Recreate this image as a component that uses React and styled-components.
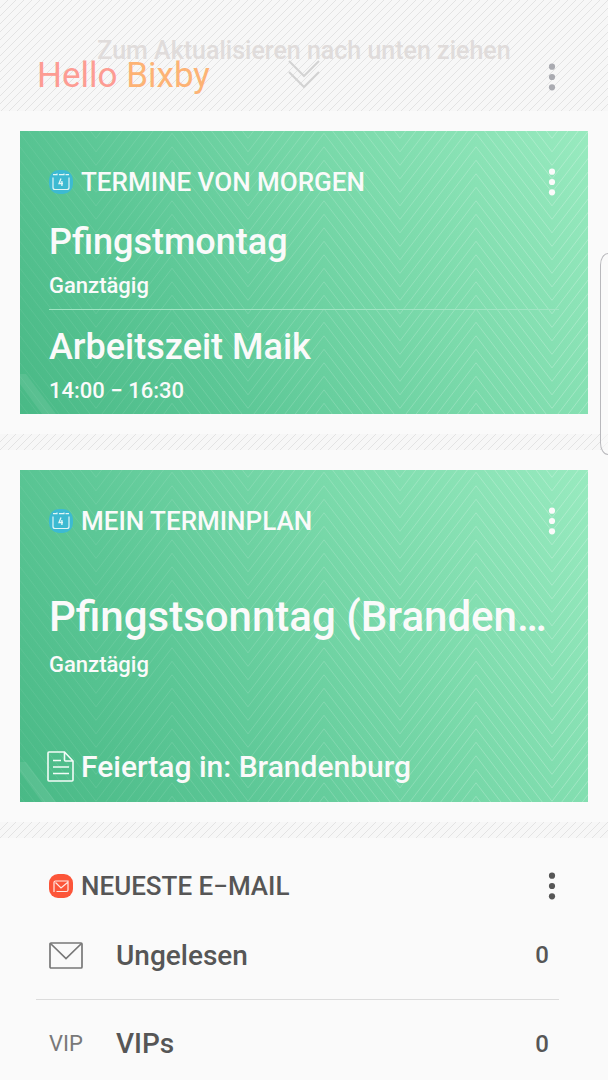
import React from 'react'
import styled, { createGlobalStyle } from 'styled-components'

const appointments = [
  { title: 'Pfingstmontag', time: 'Ganztägig' },
  { title: 'Arbeitszeit Maik', time: '14:00 − 16:30' },
]

function Chevrons() {
  const lines = []
  for (let y = -105.7; y < 420; y += 13.5) {
    const low = y + 99.5
    lines.push(
      <polyline key={y} points={`0,${y} 76,${low} 152,${y} 228,${low} 304,${y} 380,${low} 456,${y} 532,${low} 608,${y}`} />
    )
  }
  return (
    <Backdrop aria-hidden="true">
      <defs>
        <linearGradient id="fade" x1="0" y1="0" x2="1" y2="0">
          <stop offset="0" stopColor="#fff" stopOpacity="0.06" />
          <stop offset="1" stopColor="#fff" stopOpacity="0.26" />
        </linearGradient>
      </defs>
      <g fill="none" stroke="url(#fade)">{lines}</g>
      <svg y="100%" overflow="visible">
        <path d="M0-40H6L36 0H22L0-30Z" fill="#fff" fillOpacity="0.08" />
      </svg>
    </Backdrop>
  )
}

function CalendarIcon() {
  return (
    <svg width="24" height="24" viewBox="0 0 24 24" fill="none" stroke="#e2f6f5" aria-hidden="true">
      <rect width="24" height="24" rx="10" fill="#3dbad2" stroke="none" />
      <path d="M4 7.500V17.500a2 2 0 0 0 2 2H18a2 2 0 0 0 2-2V7.500" strokeWidth="1.2" />
      <path d="M4 4.700h4.500M10 4.700h5M16.500 4.700H20M8 3.500v1.800M15 3.500v1.800" strokeWidth="1.2" />
      <path d="M12 8.500 10 13.500H14M12.900 11v5" strokeWidth="1.3" />
    </svg>
  )
}

function MailBadge() {
  return (
    <svg width="24" height="24" viewBox="0 0 24 24" fill="none" aria-hidden="true">
      <rect width="24" height="24" rx="9" fill="#fc5539" />
      <path
        d="M5 18V8.500A1.500 1.500 0 0 1 6.500 7H19V16A1.500 1.500 0 0 1 17.500 17.500H7.500M6.500 8.500 12 14 18.500 8.500"
        stroke="#ffe9e4"
        strokeWidth="1.2"
      />
    </svg>
  )
}

function NoteIcon() {
  return (
    <svg width="28" height="32" viewBox="0 0 28 32" fill="none" stroke="#f2fcf7" strokeWidth="1.6" aria-hidden="true">
      <path d="M17.500 1H2a1 1 0 0 0-1 1V29a1 1 0 0 0 1 1H25a1 1 0 0 0 1-1V10ZM17.500 1V9a1 1 0 0 0 1 1H26M6 9.500h8M6 16h16M6 22.500h16" />
    </svg>
  )
}

function MailIcon() {
  return (
    <svg width="34" height="27" viewBox="0 0 34 27" fill="none" stroke="#787878" strokeWidth="1.7" aria-hidden="true">
      <rect x="1" y="1" width="32" height="25" rx="1" />
      <path d="M1.500 1.500 17 16.500 32.500 1.500" />
    </svg>
  )
}

function More({ color, label }) {
  return (
    <MoreButton type="button" aria-label={label} $color={color}>
      <svg width="8" height="28" viewBox="0 0 8 28" fill="currentColor" aria-hidden="true">
        <circle cx="4" cy="3.7" r="3.1" />
        <circle cx="4" cy="14" r="3.1" />
        <circle cx="4" cy="24.3" r="3.1" />
      </svg>
    </MoreButton>
  )
}

function App() {
  return (
    <Page>
      <GlobalStyle />
      <Header>
        <PullHint>Zum Aktualisieren nach unten ziehen</PullHint>
        <PullArrow>
          <svg width="32" height="30" viewBox="0 0 32 30" fill="none" stroke="#d3d3d3" strokeWidth="2" aria-hidden="true">
            <path d="M1 1l15 15L31 1M1 12l15 15L31 12" />
          </svg>
        </PullArrow>
        <TitleBar>
          <Logo>Hello <span>Bixby</span></Logo>
          <More color="#aaabb1" label="Menü" />
        </TitleBar>
      </Header>

      <CardSlot>
        <Card>
          <Chevrons />
          <CardHead>
            <CalendarIcon />
            <CardTitle>TERMINE VON MORGEN</CardTitle>
            <More color="#fafafa" label="Termine von morgen: Optionen" />
          </CardHead>
          {appointments.map((x) => (
            <Appointment key={x.title}>
              <AppointmentTitle>{x.title}</AppointmentTitle>
              <Time>{x.time}</Time>
            </Appointment>
          ))}
        </Card>
      </CardSlot>
      <Stripe />

      <CardSlot>
        <Card>
          <Chevrons />
          <CardHead>
            <CalendarIcon />
            <CardTitle>MEIN TERMINPLAN</CardTitle>
            <More color="#fafafa" label="Mein Terminplan: Optionen" />
          </CardHead>
          <Feature>
            <FeatureTitle>Pfingstsonntag (Brandenburg)</FeatureTitle>
            <Time>Ganztägig</Time>
          </Feature>
          <Note>
            <NoteIcon />
            <span>Feiertag in: Brandenburg</span>
          </Note>
        </Card>
      </CardSlot>
      <Stripe />

      <MailSection>
        <MailHead>
          <MailBadge />
          <CardTitle>NEUESTE E−MAIL</CardTitle>
          <More color="#565656" label="Neueste E-Mail: Optionen" />
        </MailHead>
        <MailRow>
          <MailKind><MailIcon /></MailKind>
          <MailName>Ungelesen</MailName>
          <Count>0</Count>
        </MailRow>
        <MailRow>
          <MailKind>VIP</MailKind>
          <MailName>VIPs</MailName>
          <Count>0</Count>
        </MailRow>
      </MailSection>
      <EdgeHandle />
    </Page>
  )
}

export default App

const GlobalStyle = createGlobalStyle`
* {
  box-sizing: border-box;
}
body {
  margin: 0;
  background: #fafafa;
}
`
const hatch = `#f7f7f7 url("data:image/svg+xml,%3Csvg xmlns='http://www.w3.org/2000/svg' width='8' height='8'%3E%3Cpath d='M-1 9L9-1M-1 1L1-1M7 9L9 7' stroke='%23e3e3e3'/%3E%3C/svg%3E")`

const Page = styled.div`
  position: relative;
  min-height: 100vh;
  overflow: hidden;
  background: #fafafa;
  color: #565656;
  font-family: Roboto, 'Liberation Sans', sans-serif;
  font-weight: 500;
`
const Header = styled.header`
  display: grid;
  grid-template-rows: 60px 34px;
  padding-bottom: 17px;
  background: ${hatch};
`
const PullHint = styled.p`
  grid-area: 1 / 1;
  align-self: end;
  margin: 0;
  color: #e0dcdb;
  font-size: 25px;
  line-height: 18px;
  text-align: center;
`
const PullArrow = styled.div`
  grid-area: 2 / 1;
  justify-self: center;
`
const TitleBar = styled.div`
  grid-area: 2 / 1;
  display: flex;
  align-items: center;
  padding: 0 42px 0 37px;
`
const Logo = styled.h1`
  flex: 1;
  margin: 0;
  padding-bottom: 2px;
  color: #fd9c93;
  font-size: 35px;
  font-weight: 400;
  line-height: 32px;
  span {
    color: #fdb375;
  }
`
const MoreButton = styled.button`
  display: flex;
  justify-content: center;
  width: 28px;
  padding: 0;
  border: none;
  background: none;
  color: ${(p) => p.$color};
  cursor: pointer;
`
const CardSlot = styled.div`
  padding: 20px;
`
const Card = styled.section`
  position: relative;
  padding: 35px 29px 0;
  background: linear-gradient(60deg, #49b986 0%, #5cc796 30%, #7bdaab 65%, #98eabf 100%);
  color: #fafafa;
  > * {
    position: relative;
  }
`
const Backdrop = styled.svg`
  &&& {
    position: absolute;
  }
  inset: 0;
  width: 100%;
  height: 100%;
`
const CardHead = styled.div`
  display: flex;
  align-items: center;
  gap: 8px;
  height: 32px;
  margin: 0 -7px 7px 0;
`
const CardTitle = styled.h2`
  flex: 1;
  margin: 0;
  font-size: 26px;
  font-weight: 500;
  line-height: 32px;
`
const Appointment = styled.div`
  padding: 15px 0 9px;
  & + & {
    border-top: 1px solid #a0e5c3;
  }
`
const AppointmentTitle = styled.h3`
  margin: 0;
  font-size: 36px;
  font-weight: 500;
  line-height: 44px;
`
const Time = styled.p`
  margin: 0;
  padding-top: 8px;
  font-size: 22px;
  line-height: 28px;
`
const Feature = styled.div`
  padding: 47px 0 70px;
`
const FeatureTitle = styled.h3`
  margin: 0;
  overflow: hidden;
  font-size: 42px;
  font-weight: 500;
  line-height: 52px;
  text-overflow: ellipsis;
  white-space: nowrap;
`
const Note = styled.div`
  display: flex;
  align-items: center;
  gap: 6px;
  margin-left: -2px;
  padding-bottom: 17px;
  font-size: 30px;
  line-height: 36px;
`
const Stripe = styled.div`
  height: 16px;
  background: ${hatch};
`
const MailSection = styled.section`
  padding: 32px 49px 0 36px;
`
const MailHead = styled.div`
  display: flex;
  align-items: center;
  gap: 8px;
  margin-right: -7px;
  padding: 0 0 9px 13px;
`
const MailRow = styled.div`
  display: flex;
  align-items: center;
  height: 88px;
  padding: 0 10px 0 13px;
  & + & {
    border-top: 1px solid #dcdcdc;
  }
`
const MailKind = styled.div`
  display: flex;
  width: 67px;
  color: #787878;
  font-size: 22px;
  font-weight: 400;
`
const MailName = styled.span`
  flex: 1;
  font-size: 28px;
`
const Count = styled.span`
  font-size: 24px;
`
const EdgeHandle = styled.div`
  position: absolute;
  top: 253px;
  right: -12px;
  width: 20px;
  height: 202px;
  border: 1px solid #b9b9bd;
  border-radius: 8px / 12px;
  background: rgba(250, 250, 250, 0.6);
`
